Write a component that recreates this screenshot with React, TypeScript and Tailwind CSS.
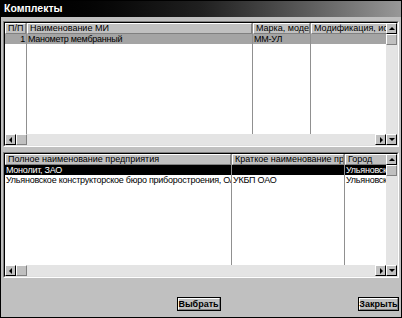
import React from 'react';

type Col = { title: string; w: number; align?: 'right' };

const Arrow: React.FC<{ dir: 'up' | 'down' | 'left' | 'right' }> = ({ dir }) => {
    const pts = {
        up: '1,5 4,2 7,5',
        down: '1,2 4,5 7,2',
        left: '5,1 2,4 5,7',
        right: '3,1 6,4 3,7',
    }[dir];
    return (
        <div className="w-[11px] h-[11px] shrink-0 bg-[#c0c0c0] border border-t-white border-l-white border-b-black border-r-black flex items-center justify-center">
            <svg width="8" height="8" viewBox="0 0 8 8"><polygon points={pts} fill="#000" /></svg>
        </div>
    );
};

const Thumb: React.FC = () => (
    <div className="w-[11px] h-[11px] shrink-0 bg-[#c0c0c0] border border-t-white border-l-white border-b-[#808080] border-r-[#808080]" />
);

const Grid: React.FC<{
    cols: Col[];
    rows: string[][];
    sel: number;
    selCls: string;
    h: string;
}> = ({ cols, rows, sel, selCls, h }) => (
    <div className={`${h} border border-t-[#808080] border-l-[#808080] border-b-white border-r-white`}>
        <div className="h-full border border-t-black border-l-black border-b-[#dfdfdf] border-r-[#dfdfdf] flex">
            <div className="flex-1 flex flex-col min-w-0">
                <div className="flex-1 bg-white flex overflow-hidden">
                    {cols.map((c, ci) => (
                        <div key={ci} className="shrink-0 flex flex-col border-r border-[#909090] overflow-hidden" style={{ width: c.w }}>
                            <div className="h-[11px] bg-[#c0c0c0] border border-t-white border-l-white border-b-[#808080] border-r-[#808080] px-[2px] leading-[9px] whitespace-nowrap overflow-hidden">
                                {c.title}
                            </div>
                            {rows.map((r, ri) => (
                                <div
                                    key={ri}
                                    className={`h-[10px] leading-[10px] px-[1px] tracking-[-0.25px] whitespace-nowrap overflow-hidden ${c.align === 'right' ? 'text-right' : ''} ${ri === sel ? selCls : ''}`}
                                >
                                    {r[ci]}
                                </div>
                            ))}
                        </div>
                    ))}
                </div>
                <div className="h-[11px] flex bg-[#e4e4e4]">
                    <Arrow dir="left" />
                    <Thumb />
                    <div className="flex-1" />
                    <Arrow dir="right" />
                </div>
            </div>
            <div className="w-[11px] flex flex-col bg-[#e4e4e4]">
                <Arrow dir="up" />
                <Thumb />
                <div className="flex-1" />
                <Arrow dir="down" />
            </div>
        </div>
    </div>
);

const Btn: React.FC<{ label: string; w: string }> = ({ label, w }) => (
    <div className={`${w} h-[14px] border border-black`}>
        <div className="h-full bg-[#c0c0c0] border border-t-white border-l-white border-b-[#808080] border-r-[#808080] flex items-center justify-center font-bold text-[9px] leading-none">
            {label}
        </div>
    </div>
);

export default function App() {
    return (
        <div className="w-[402px] h-[318px] bg-[#c0c0c0] border border-black flex flex-col text-black text-[9px] font-['Liberation_Sans',Arial,sans-serif]">
            <div className="h-[16px] shrink-0 bg-gradient-to-r from-black via-[#202020] to-[#989898] text-white font-bold text-[10.5px] px-[3px] flex items-center">
                Комплекты
            </div>
            <div className="px-[2px] pt-[4px]">
                <Grid
                    h="h-[126px]"
                    cols={[
                        { title: 'П/П', w: 22, align: 'right' },
                        { title: 'Наименование МИ', w: 226 },
                        { title: 'Марка, модель', w: 58 },
                        { title: 'Модификация, исполнение', w: 90 },
                    ]}
                    rows={[['1', 'Манометр мембранный', 'ММ-УЛ', '']]}
                    sel={0}
                    selCls="bg-[#a4a4a4]"
                />
            </div>
            <div className="px-[2px] pt-[5px]">
                <Grid
                    h="h-[126px]"
                    cols={[
                        { title: 'Полное наименование предприятия', w: 227 },
                        { title: 'Краткое наименование предприятия', w: 113 },
                        { title: 'Город', w: 60 },
                    ]}
                    rows={[
                        ['Монолит, ЗАО', '', 'Ульяновск'],
                        ['Ульяновское конструкторское бюро приборостроения, ОАО', 'УКБП ОАО', 'Ульяновск'],
                    ]}
                    sel={0}
                    selCls="bg-black text-white"
                />
            </div>
            <div className="flex-1 flex items-end pb-[6px] px-[2px]">
                <div className="flex-1 flex justify-center pl-[36px]">
                    <Btn label="Выбрать" w="w-[44px]" />
                </div>
                <Btn label="Закрыть" w="w-[41px]" />
            </div>
        </div>
    );
}
